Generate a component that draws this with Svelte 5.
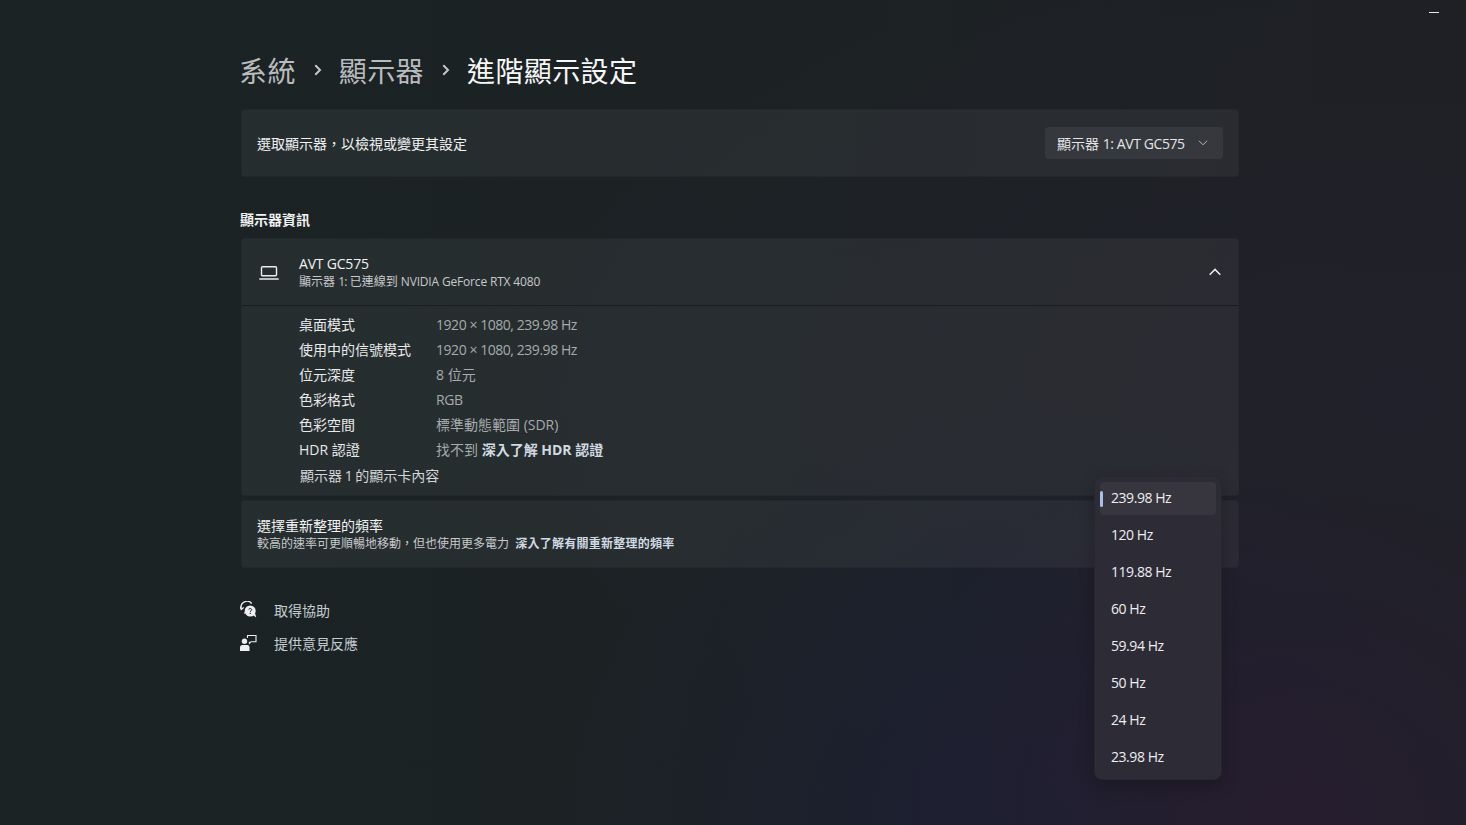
<script>
    const details = [
        { label: "桌面模式", value: "1920 × 1080, 239.98 Hz", latin: true },
        { label: "使用中的信號模式", value: "1920 × 1080, 239.98 Hz", latin: true },
        { label: "位元深度", value: "8 位元" },
        { label: "色彩格式", value: "RGB", latin: true },
        { label: "色彩空間", value: "標準動態範圍 (SDR)" },
    ];
    const rates = ["239.98 Hz", "120 Hz", "119.88 Hz", "60 Hz", "59.94 Hz", "50 Hz", "24 Hz", "23.98 Hz"];
</script>

<div class="page">
    <div class="titlebar"><span class="minimize"></span></div>

    <main class="content">
        <h1 class="crumbs">
            <span class="crumb">系統</span>
            <svg class="sep" width="10" height="14" viewBox="0 0 10 14"><path d="M2.300 2.300 7 7l-4.700 4.700" fill="none" stroke="#c4c7c8" stroke-width="2"/></svg>
            <span class="crumb">顯示器</span>
            <svg class="sep" width="10" height="14" viewBox="0 0 10 14"><path d="M2.300 2.300 7 7l-4.700 4.700" fill="none" stroke="#c4c7c8" stroke-width="2"/></svg>
            <span class="crumb current">進階顯示設定</span>
        </h1>

        <section class="card select-row">
            <span>選取顯示器，以檢視或變更其設定</span>
            <div class="combo">
                <span>顯示器 <span class="combo-latin">1: AVT GC575</span></span>
                <svg width="10" height="6" viewBox="0 0 10 6"><path d="M1 .8 5 4.800 9 .8" fill="none" stroke="#b9babc" stroke-width="1"/></svg>
            </div>
        </section>

        <h2 class="section-title">顯示器資訊</h2>

        <section class="card info">
            <header class="info-head">
                <svg class="laptop" width="20" height="16" viewBox="0 0 20 16"><path d="M3.500 2.700h13a1 1 0 0 1 1 1v7a1 1 0 0 1-1 1h-13a1 1 0 0 1-1-1v-7a1 1 0 0 1 1-1Z" fill="none" stroke="#eceeee" stroke-width="1.400"/><path d="M.3 15h19.400" stroke="#eceeee" stroke-width="1.500"/></svg>
                <div class="info-text">
                    <div class="name">AVT GC575</div>
                    <div class="sub">顯示器 <span class="sub-num">1:</span> 已連線到 <span class="sub-latin">NVIDIA GeForce RTX 4080</span></div>
                </div>
                <svg class="up" width="12" height="8" viewBox="0 0 12 8"><path d="M.7 6.800 6 1.400l5.300 5.400" fill="none" stroke="#eceded" stroke-width="1.500"/></svg>
            </header>
            <div class="info-body">
                {#each details as row}
                    <div class="row">
                        <span class="key">{row.label}</span>
                        <span class="value" class:latin={row.latin}>{row.value}</span>
                    </div>
                {/each}
                <div class="row">
                    <span class="key">HDR 認證</span>
                    <span class="value">找不到 <b class="link">深入了解 HDR 認證</b></span>
                </div>
                <div class="adapter">顯示器 1 的顯示卡內容</div>
            </div>
        </section>

        <section class="card rate-row">
            <div class="rate-title">選擇重新整理的頻率</div>
            <div class="sub">較高的速率可更順暢地移動，但也使用更多電力 <b class="link small">深入了解有關重新整理的頻率</b></div>
        </section>

        <nav class="help">
            <div class="help-item">
                <svg width="18" height="18" viewBox="0 0 18 18">
                    <g transform="translate(-.3 -1)">
                        <path d="M1.500 8.500a6 6 0 0 1 10.500-5" fill="none" stroke="#eef0f0" stroke-width="1.300"/>
                        <path d="M.3 6.500 1.500 9.500 4 7.500" fill="none" stroke="#eef0f0" stroke-width="1.200"/>
                        <path d="M4.500 12.500a5 5 0 0 0 1 1" fill="none" stroke="#eef0f0" stroke-width="1.200"/>
                        <circle cx="10.500" cy="11" r="5.500" fill="#eef0f0"/>
                        <path d="M13 15l3.500 2.500-1-4Z" fill="#eef0f0"/>
                        <path d="M9 9.500c.2-1.400 3-1.400 3 .2 0 1-1.400 1-1.400 2.200" fill="none" stroke="#1c2326" stroke-width="1"/>
                        <circle cx="10.600" cy="13.400" r=".7" fill="#1c2326"/>
                    </g>
                </svg>
                <span>取得協助</span>
            </div>
            <div class="help-item">
                <svg width="18" height="18" viewBox="0 0 18 18">
                    <circle cx="4.500" cy="7.300" r="2.700" fill="#eef0f0"/>
                    <path d="M0 17v-3.500a2.500 2.500 0 0 1 2.500-2.500h4.500a2.500 2.500 0 0 1 2.500 2.500v3.500Z" fill="#eef0f0"/>
                    <path d="M7.500 4V1.500h8.500v6.200h-5l-1.600 1.600V7.700" fill="none" stroke="#eef0f0" stroke-width="1.100"/>
                </svg>
                <span>提供意見反應</span>
            </div>
        </nav>
    </main>

    <div class="flyout">
        {#each rates as rate, i}
            <div class="option" class:selected={i === 0}>{rate}</div>
        {/each}
    </div>
</div>

<style>
    :global(body) {
        margin: 0;
        background: #1c2326;
    }

    .page {
        position: relative;
        width: 1466px;
        height: 825px;
        overflow: hidden;
        font-family: "Open Sans", "Noto Sans CJK TC", sans-serif;
        font-size: 14px;
        color: #f0f2f2;
        background:
            radial-gradient(420px 400px at 1300px 830px, #261d2e 0%, rgba(38, 29, 46, 0) 100%),
            radial-gradient(480px 420px at 1040px 825px, #1c1f34 0%, rgba(28, 31, 52, 0) 100%),
            radial-gradient(900px 500px at 1400px 400px, #20212a 0%, rgba(32, 33, 42, 0) 100%),
            linear-gradient(90deg, #1b2325 0%, #1c2224 50%, #1e2023 100%);
    }

    .titlebar {
        position: absolute;
        top: 0;
        right: 0;
        width: 64px;
        height: 26px;
    }
    .minimize {
        position: absolute;
        left: 27px;
        top: 12px;
        width: 10px;
        height: 1px;
        background: #e8e8e8;
    }

    .content {
        width: 999px;
        margin-left: 240px;
        padding-top: 49px;
        display: flex;
        flex-direction: column;
    }

    .crumbs {
        margin: 0 0 18px -1px;
        height: 42px;
        display: flex;
        align-items: center;
        font-size: 28px;
        font-weight: 400;
        line-height: 42px;
        letter-spacing: 0.4px;
        font-family: "Noto Sans CJK TC", sans-serif;
    }
    .crumb { color: #b9bcbd; }
    .current { color: #f6f7f7; }
    .sep { margin: 0 16px 0 17px; }

    .card {
        box-sizing: border-box;
        margin-left: 1px;
        background: rgba(255, 255, 255, 0.052);
        border: 1px solid rgba(0, 0, 0, 0.08);
        border-radius: 4px;
    }

    .select-row {
        height: 68px;
        padding: 0 15px;
        display: flex;
        align-items: center;
        justify-content: space-between;
    }

    .combo {
        width: 178px;
        height: 32px;
        box-sizing: border-box;
        padding: 0 15px 0 12px;
        display: flex;
        align-items: center;
        justify-content: space-between;
        background: rgba(255, 255, 255, 0.06);
        border-radius: 4px;
        color: #e4e5e6;
    }
    .combo-latin { letter-spacing: -0.4px; }

    .section-title {
        margin: 33px 0 8px;
        height: 20px;
        font-size: 14px;
        line-height: 20px;
        font-weight: 700;
    }

    .info { height: 258px; }

    .info-head {
        height: 67px;
        box-sizing: border-box;
        padding: 0 17px;
        display: flex;
        align-items: center;
        border-bottom: 1px solid rgba(0, 0, 0, 0.35);
    }
    .laptop { margin-right: 20px; }
    .info-text { flex: 1; }
    .name {
        line-height: 18px;
        letter-spacing: -0.2px;
    }
    .sub {
        font-size: 12px;
        line-height: 17px;
        color: #c6cacb;
    }
    .sub-num { letter-spacing: -0.8px; }
    .sub-latin { letter-spacing: -0.17px; }

    .info-body { padding: 6px 0 0 57px; }

    .row {
        display: flex;
        height: 25px;
        line-height: 25px;
    }
    .key {
        width: 137px;
        color: #e8eaea;
    }
    .value { color: #a6abac; }
    .latin { letter-spacing: -0.45px; }
    .link {
        color: #d0dae2;
        font-weight: 700;
    }
    .small {
        margin-left: 3px;
        letter-spacing: 0.25px;
    }

    .adapter {
        height: 26px;
        margin: 1px 0 0 1px;
        line-height: 26px;
        word-spacing: -1px;
        color: #d3d6d7;
    }

    .rate-row {
        height: 68px;
        margin-top: 4px;
        padding: 16px 15px 0;
    }
    .rate-title { line-height: 18px; }

    .help {
        margin-top: 32px;
        display: flex;
        flex-direction: column;
        gap: 13px;
    }
    .help-item {
        display: flex;
        align-items: center;
        gap: 16px;
        height: 20px;
        color: #c5ccd2;
    }

    .flyout {
        position: absolute;
        left: 1094px;
        top: 476px;
        width: 128px;
        height: 304px;
        box-sizing: border-box;
        padding: 5px 5px 0;
        background: #2d2c36;
        border: 1px solid #28272e;
        border-radius: 8px;
        box-shadow: 0 6px 16px rgba(0, 0, 0, 0.22);
    }
    .option {
        position: relative;
        height: 33px;
        margin-bottom: 4px;
        padding-left: 11px;
        line-height: 32px;
        letter-spacing: -0.45px;
        border-radius: 4px;
        color: #eeeef0;
    }
    .selected { background: #37363e; }
    .selected::before {
        content: "";
        position: absolute;
        left: 0;
        top: 9px;
        width: 3px;
        height: 16px;
        border-radius: 2px;
        background: #a9bfe6;
    }
</style>
